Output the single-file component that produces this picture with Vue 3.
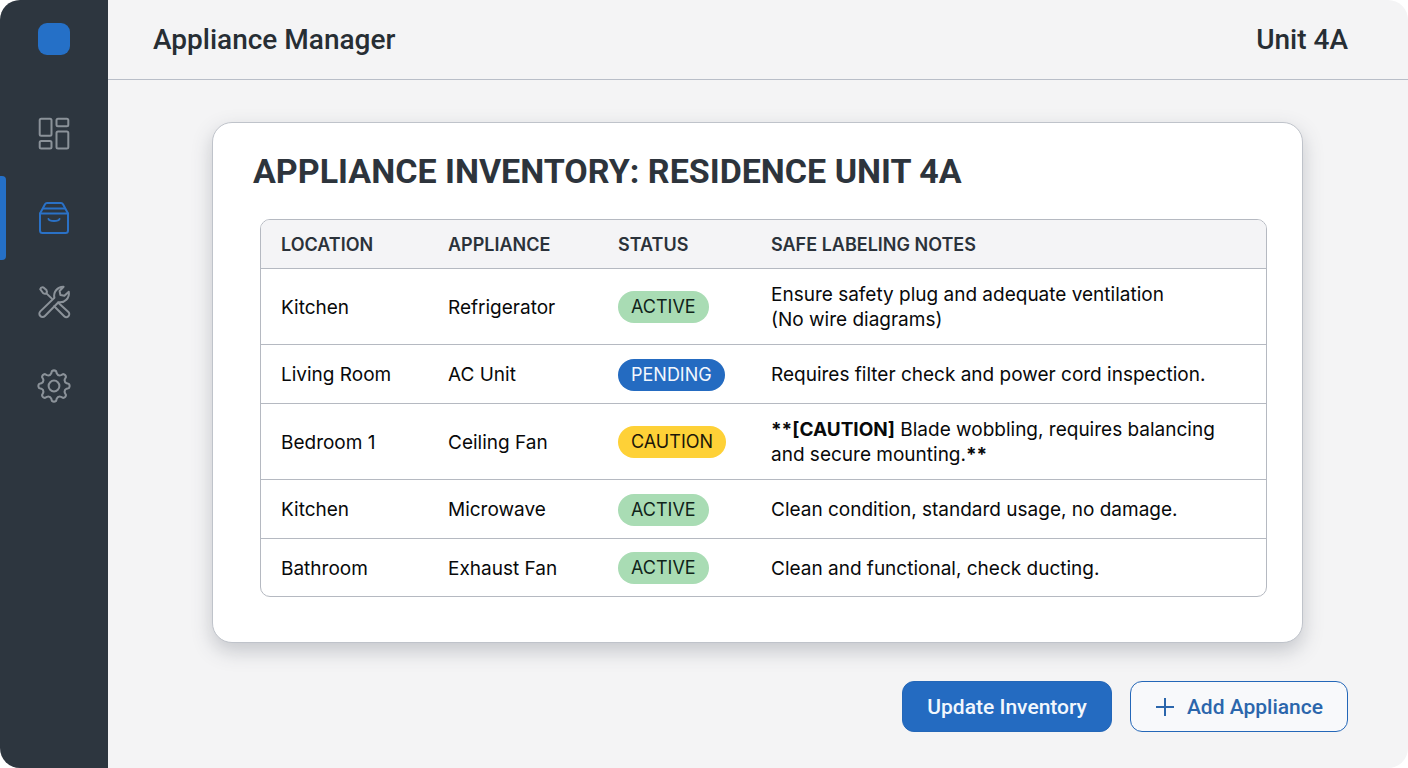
<template>
  <div class="app">
    <aside class="sidebar">
      <a class="logo" href="#" aria-label="Home"></a>
      <nav class="nav">
        <a
          v-for="item in navItems"
          :key="item.id"
          href="#"
          :aria-label="item.label"
          :class="['nav-item', { active: item.id === current }]"
          @click.prevent="current = item.id"
        >
          <svg v-if="item.id === 'dashboard'" class="icon" viewBox="0 0 34 34">
            <rect x="2.7" y="1.7" width="11.8" height="17" rx="1.5" />
            <rect x="19.5" y="1.7" width="11.8" height="7.6" rx="1.5" />
            <rect x="2.7" y="24" width="11.8" height="7.6" rx="1.5" />
            <rect x="19.5" y="14.6" width="11.8" height="17" rx="1.5" />
          </svg>
          <svg v-else-if="item.id === 'inventory'" class="icon" viewBox="0 0 34 34">
            <path d="M3 12.5 8 3.2Q8.7 2 10 2H24Q25.3 2 26 3.2L31 12.5V29.5Q31 32 28.5 32H5.5Q3 32 3 29.5Z" />
            <path d="M3 12.5H31M6.5 7.5H27.5" />
            <path d="M11.5 18C12.5 20.6 21.5 20.6 22.500 18" />
          </svg>
          <svg v-else-if="item.id === 'tools'" class="icon" viewBox="0 1 34 34">
            <path d="M3.2 5.2Q3.800 2.8 6.5 3.4L9.4 6Q10.4 7.6 9.4 9.3Q7.8 10.2 6 9Z" />
            <path d="M9.7 9.6 14.6 14.4" />
            <path d="M26.6 2.800A9 9 0 0 0 17.4 13.8L3.3 27.4A3.2 3.2 0 0 0 7.9 32L21.4 18.2A9 9 0 0 0 31.8 7.8L27.4 11.8L23.4 11L22.6 7Z" />
            <path d="M21 18.6 31.4 28A2.9 2.9 0 0 1 27.2 32.2L17.2 22.2" />
          </svg>
          <svg v-else class="icon" viewBox="0 0 34 34">
            <path :d="gearPath" />
            <circle cx="17" cy="17" r="5.4" />
          </svg>
        </a>
      </nav>
    </aside>

    <div class="content">
      <header class="topbar">
        <span>Appliance Manager</span>
        <span>Unit 4A</span>
      </header>

      <main class="main">
        <section class="card">
          <h1>APPLIANCE INVENTORY: RESIDENCE UNIT 4A</h1>
          <table>
            <thead>
              <tr>
                <th class="col-location">LOCATION</th>
                <th class="col-appliance">APPLIANCE</th>
                <th class="col-status">STATUS</th>
                <th>SAFE LABELING NOTES</th>
              </tr>
            </thead>
            <tbody>
              <tr v-for="(row, idx) in rows" :key="idx">
                <td>{{ row.location }}</td>
                <td>{{ row.appliance }}</td>
                <td>
                  <span :class="['badge', row.status.toLowerCase()]">{{ row.status }}</span>
                </td>
                <td>
                  <template v-for="(line, n) in row.notes" :key="n">
                    <br v-if="n > 0" />
                    <b v-if="line.lead">{{ line.lead }}</b>{{ line.text }}<b v-if="line.tail">{{ line.tail }}</b>
                  </template>
                </td>
              </tr>
            </tbody>
          </table>
        </section>

        <div class="actions">
          <button type="button" class="btn primary">Update Inventory</button>
          <button type="button" class="btn outline">
            <svg class="plus" viewBox="0 0 20 20"><path d="M10 1V19M1 10H19" /></svg>
            Add Appliance
          </button>
        </div>
      </main>
    </div>
  </div>
</template>

<script setup>
import { ref } from 'vue'

const current = ref('inventory')

const navItems = [
  { id: 'dashboard', label: 'Dashboard' },
  { id: 'inventory', label: 'Inventory' },
  { id: 'tools', label: 'Maintenance' },
  { id: 'settings', label: 'Settings' }
]

const rows = [
  {
    location: 'Kitchen',
    appliance: 'Refrigerator',
    status: 'ACTIVE',
    notes: [{ text: 'Ensure safety plug and adequate ventilation' }, { text: '(No wire diagrams)' }]
  },
  {
    location: 'Living Room',
    appliance: 'AC Unit',
    status: 'PENDING',
    notes: [{ text: 'Requires filter check and power cord inspection.' }]
  },
  {
    location: 'Bedroom 1',
    appliance: 'Ceiling Fan',
    status: 'CAUTION',
    notes: [
      { lead: '**[CAUTION]', text: ' Blade wobbling, requires balancing' },
      { text: 'and secure mounting.', tail: '**' }
    ]
  },
  {
    location: 'Kitchen',
    appliance: 'Microwave',
    status: 'ACTIVE',
    notes: [{ text: 'Clean condition, standard usage, no damage.' }]
  },
  {
    location: 'Bathroom',
    appliance: 'Exhaust Fan',
    status: 'ACTIVE',
    notes: [{ text: 'Clean and functional, check ducting.' }]
  }
]

// 8-tooth gear: rounded tooth tips with soft valleys between them
const buildGear = () => {
  const at = (r, deg) => {
    const a = (deg * Math.PI) / 180
    return `${(17 + r * Math.cos(a)).toFixed(2)} ${(17 + r * Math.sin(a)).toFixed(2)}`
  }
  let d = `M${at(15, -8)}`
  for (let i = 0; i < 8; i++) {
    const c = i * 45
    d += `Q${at(16.4, c)} ${at(15, c + 8)}`
    d += `L${at(13, c + 12)}`
    d += `Q${at(10.6, c + 22.5)} ${at(13, c + 33)}`
    d += `L${at(15, c + 37)}`
  }
  return d + 'Z'
}
const gearPath = buildGear()
</script>

<style>
body {
  margin: 0;
  background: #fff;
}
</style>

<style scoped>
.app {
  display: flex;
  min-height: 100vh;
  border-radius: 20px;
  overflow: hidden;
  background: #f4f4f5;
  font-family: Inter, Roboto, 'Liberation Sans', sans-serif;
  font-size: 19px;
  line-height: 25px;
  color: #08090a;
}

.sidebar {
  flex: none;
  width: 108px;
  background: #2d363f;
}

.logo {
  display: block;
  width: 32px;
  height: 32px;
  margin: 23px auto 37px;
  border-radius: 9px;
  background: #2570c7;
}

.nav-item {
  display: flex;
  align-items: center;
  height: 84px;
  color: #8b9299;
}

.nav-item::before {
  content: '';
  width: 6px;
  height: 100%;
  margin-right: 31px;
  border-radius: 0 4px 4px 0;
}

.nav-item.active {
  color: #2a71c6;
}

.nav-item.active::before {
  background: #2570c7;
}

.icon {
  width: 34px;
  height: 34px;
  fill: none;
  stroke: currentColor;
  stroke-width: 2;
  stroke-linecap: round;
  stroke-linejoin: round;
}

.content {
  flex: 1;
  min-width: 0;
  display: flex;
  flex-direction: column;
}

.topbar {
  display: flex;
  align-items: center;
  justify-content: space-between;
  height: 80px;
  box-sizing: border-box;
  padding: 0 60px 0 45px;
  border-bottom: 1px solid #b9bec8;
  font-family: Roboto, 'Liberation Sans', sans-serif;
  font-size: 28px;
  font-weight: 500;
  color: #272e34;
}

.main {
  padding: 42px 60px 36px 104px;
}

.card {
  margin-right: 45px;
  padding: 28px 35px 45px 40px;
  border: 1px solid #bfc3ca;
  border-radius: 20px;
  background: #fff;
  box-shadow: 0 8px 20px rgba(60, 68, 84, 0.26);
}

h1 {
  margin: 0 0 28px;
  font-family: Roboto, 'Liberation Sans', sans-serif;
  font-size: 34px;
  line-height: 40px;
  font-weight: 700;
  color: #2d343c;
}

table {
  width: calc(100% - 7px);
  margin-left: 7px;
  table-layout: fixed;
  border: 1px solid #b5b9c1;
  border-radius: 10px;
  border-collapse: separate;
  border-spacing: 0;
  overflow: hidden;
}

th,
td {
  box-sizing: border-box;
  height: 59px;
  padding: 13px 0 12px 20px;
  border-bottom: 1px solid #b5b9c1;
  text-align: left;
  vertical-align: middle;
}

th {
  height: 49px;
  padding: 12px 0 11px 20px;
  background: #f4f4f6;
  font-size: 18px;
  font-weight: 600;
  color: #2b323a;
}

tbody tr:last-child td {
  height: 57px;
  border-bottom: 0;
}

.col-location {
  width: 167px;
}

.col-appliance {
  width: 170px;
}

.col-status {
  width: 153px;
}

.badge {
  display: block;
  width: fit-content;
  padding: 0 13px;
  border-radius: 16px;
  font-size: 18px;
  line-height: 32px;
}

.badge.active {
  background: #a9dcb4;
  color: #10241a;
}

.badge.pending {
  background: #246bc1;
  color: #f2f7fd;
}

.badge.caution {
  background: #fed137;
  color: #1c1709;
}

.actions {
  display: flex;
  justify-content: flex-end;
  gap: 18px;
  margin-top: 38px;
}

.btn {
  display: flex;
  align-items: center;
  gap: 12px;
  height: 51px;
  padding: 0 24px;
  border: 1px solid #2467b8;
  border-radius: 12px;
  font-family: Roboto, 'Liberation Sans', sans-serif;
  font-size: 21px;
  font-weight: 500;
  cursor: pointer;
}

.btn.primary {
  background: #246bc1;
  color: #f2f7fd;
}

.btn.outline {
  background: #f8f9fb;
  color: #2b66ac;
}

.plus {
  width: 20px;
  height: 20px;
  fill: none;
  stroke: currentColor;
  stroke-width: 2;
}
</style>
